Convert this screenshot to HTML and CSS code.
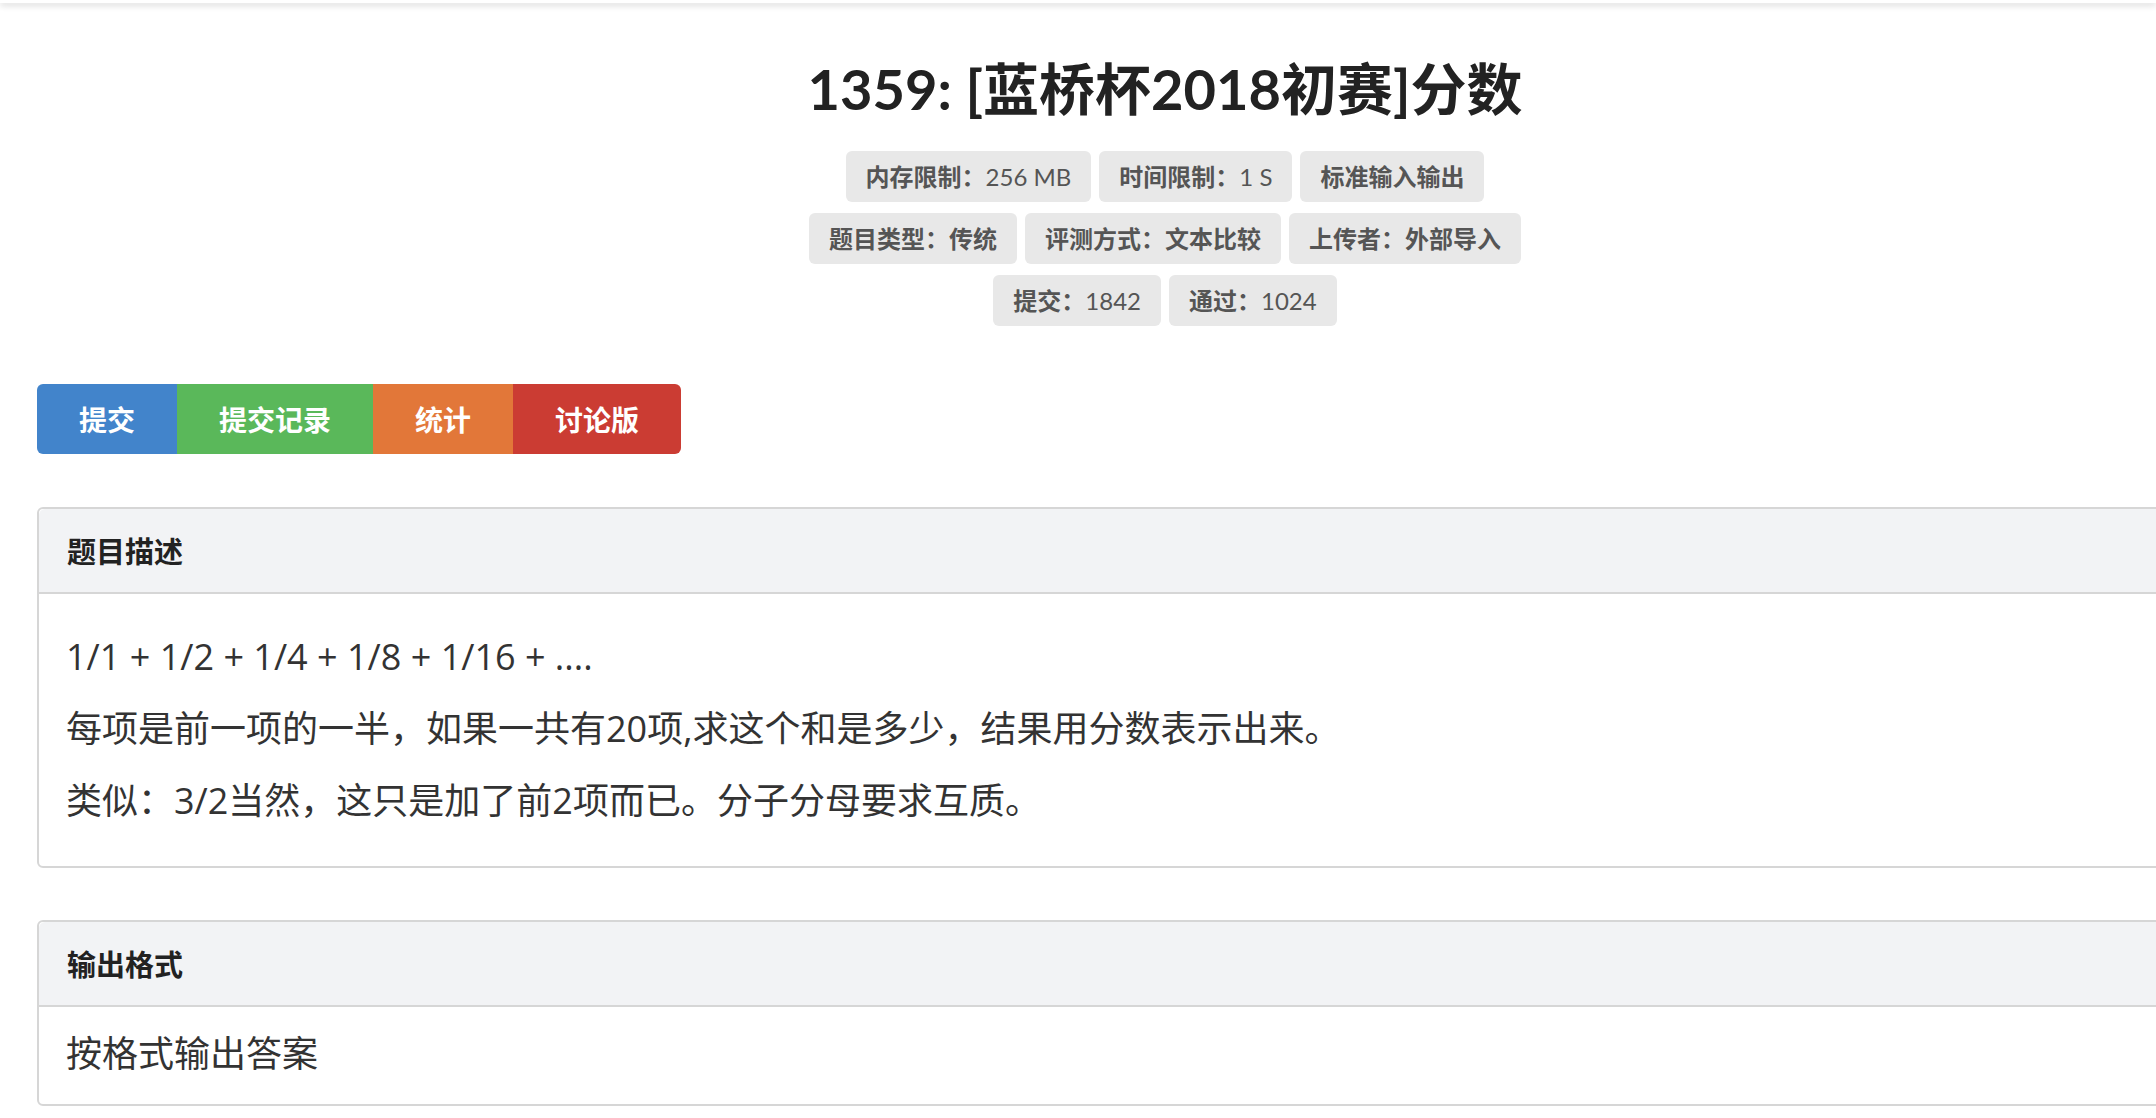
FILE: index.html
```html
<!DOCTYPE html>
<html lang="zh-CN">
<head>
    <meta charset="UTF-8">
    <meta name="viewport" content="width=device-width, initial-scale=1.0">
    <title>1359: [蓝桥杯2018初赛]分数</title>
    <link rel="stylesheet" href="styles.css">
</head>
<body>
    <div class="top-bar"></div>

    <div class="container">
        <h1 class="problem-title">1359: [蓝桥杯2018初赛]分数</h1>

        <div class="problem-meta">
            <div class="meta-row">
                <span class="meta-label"><span class="k">内存限制：</span>256 MB</span>
                <span class="meta-label"><span class="k">时间限制：</span>1 S</span>
                <span class="meta-label"><span class="k">标准输入输出</span></span>
            </div>
            <div class="meta-row">
                <span class="meta-label"><span class="k">题目类型：传统</span></span>
                <span class="meta-label"><span class="k">评测方式：文本比较</span></span>
                <span class="meta-label"><span class="k">上传者：外部导入</span></span>
            </div>
            <div class="meta-row">
                <span class="meta-label"><span class="k">提交：</span>1842</span>
                <span class="meta-label"><span class="k">通过：</span>1024</span>
            </div>
        </div>

        <div class="btn-group">
            <a class="btn btn-primary" href="#">提交</a>
            <a class="btn btn-success" href="#">提交记录</a>
            <a class="btn btn-warning" href="#">统计</a>
            <a class="btn btn-danger" href="#">讨论版</a>
        </div>

        <div class="panel">
            <div class="panel-heading">题目描述</div>
            <div class="panel-body description">
                <p>1/1 + 1/2 + 1/4 + 1/8 + 1/16 + ....</p>
                <p>每项是前一项的一半，如果一共有20项,求这个和是多少，结果用分数表示出来。</p>
                <p>类似：3/2当然，这只是加了前2项而已。分子分母要求互质。</p>
            </div>
        </div>

        <div class="panel">
            <div class="panel-heading">输出格式</div>
            <div class="panel-body output">
                <p>按格式输出答案</p>
            </div>
        </div>
    </div>
</body>
</html>
```

FILE: styles.css
```css
html, body {
    overflow: hidden;
}

body {
    margin: 0;
    background: #fff;
    color: #333;
    font-family: "Open Sans", "Noto Sans CJK SC", sans-serif;
}

.top-bar {
    height: 3px;
    background: #fff;
    box-shadow: 0 2px 6px rgba(0,0,0,0.22);
}

.container {
    width: 2256px;
    margin-left: 37px;
}

.problem-title {
    margin: 55px 0 0;
    text-align: center;
    font-family: Lato, "Noto Sans CJK SC", sans-serif;
    font-size: 56px;
    font-weight: bold;
    line-height: 62px;
    color: #222;
}

.problem-meta {
    margin-top: 31px;
    display: flex;
    flex-direction: column;
    gap: 11px;
}

.meta-row {
    display: flex;
    justify-content: center;
    gap: 8px;
}

.meta-label {
    height: 51px;
    line-height: 51px;
    padding: 0 20px;
    background: #e8e8e8;
    border-radius: 6px;
    color: #555;
    font-family: Lato, "Noto Sans CJK SC", sans-serif;
    font-size: 24px;
}

.meta-label .k {
    font-weight: bold;
}

.btn-group {
    display: flex;
    margin-top: 58px;
}

.btn {
    display: block;
    height: 70px;
    line-height: 70px;
    padding: 0 42px;
    color: #fff;
    font-family: "Noto Sans CJK SC", sans-serif;
    font-size: 28px;
    font-weight: bold;
    text-decoration: none;
}

.btn:first-child {
    border-radius: 6px 0 0 6px;
}

.btn:last-child {
    border-radius: 0 6px 6px 0;
}

.btn-primary { background: #4284cb; }
.btn-success { background: #5ab85a; }
.btn-warning { background: #e27739; }
.btn-danger  { background: #cb3c33; }

.panel {
    margin-top: 53px;
    border: 2px solid #d6d6d6;
    border-radius: 6px;
}

.panel + .panel {
    margin-top: 52px;
}

.panel-heading {
    height: 83px;
    line-height: 83px;
    padding: 0 28px;
    background: #f2f3f5;
    border-bottom: 2px solid #d6d6d6;
    border-radius: 6px 6px 0 0;
    color: #222;
    font-family: "Noto Sans CJK SC", sans-serif;
    font-size: 29px;
    font-weight: bold;
}

.panel-body {
    padding: 20px 28px 20px 27px;
}

.panel-body p {
    margin: 0;
    font-size: 36px;
    line-height: 54px;
    color: #333;
}

.description p {
    margin-bottom: 18px;
}

.description p:first-child {
    margin-top: 16px;
}

.output {
    padding-bottom: 23px;
}
```
